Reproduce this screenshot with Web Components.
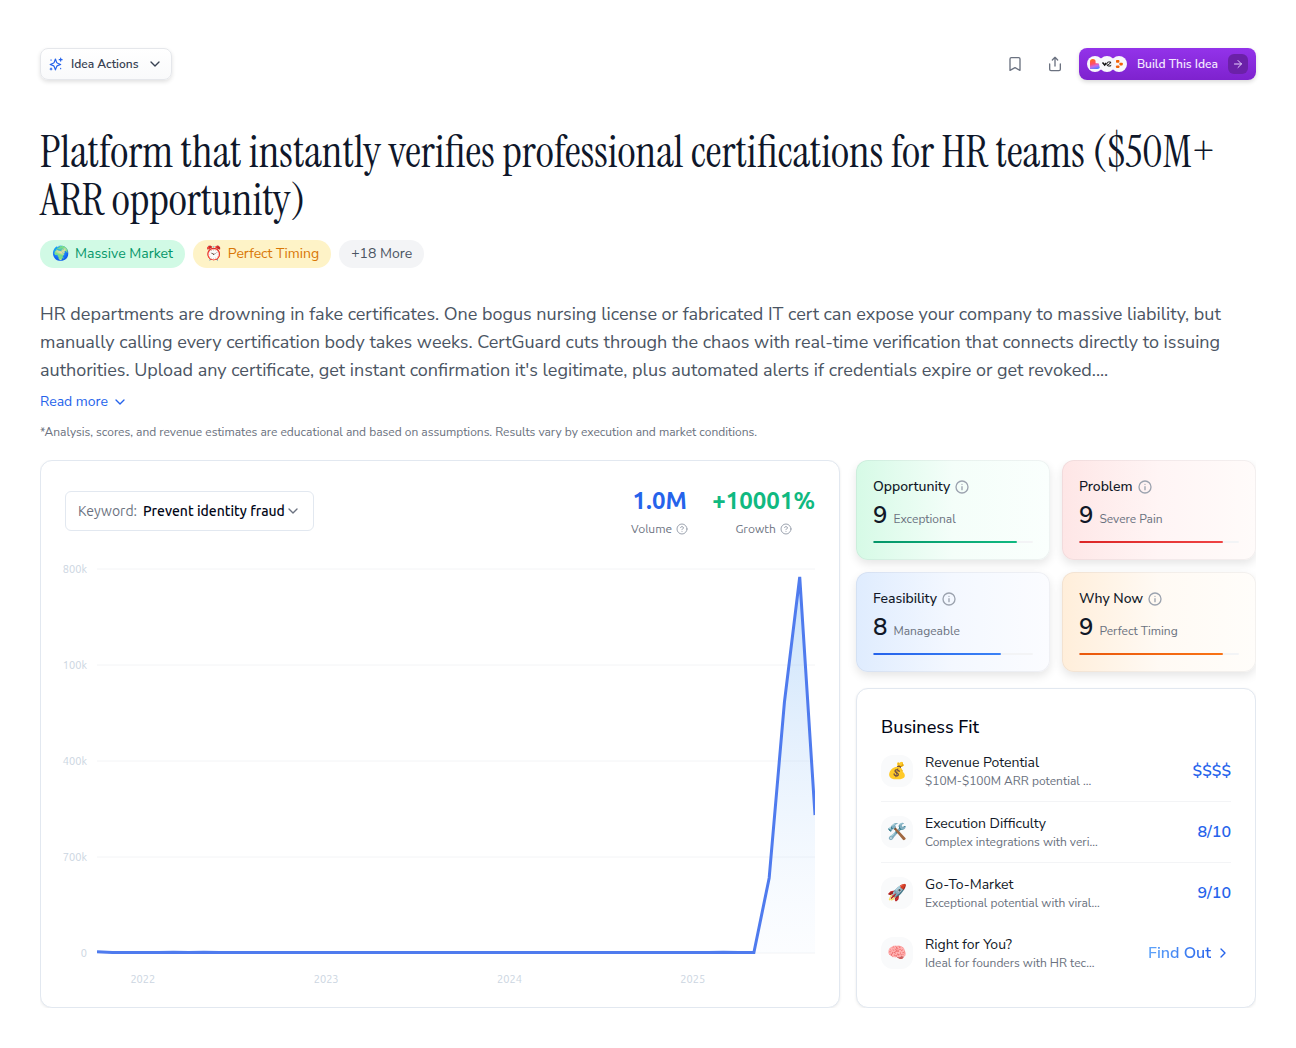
<!DOCTYPE html>
<html lang="en">
<head>
<meta charset="utf-8">
<meta name="viewport" content="width=device-width, initial-scale=1">
<title>Idea overview</title>
<style>
  body {
    margin: 0;
    background: #fff;
    color: #111827;
    font-family: "Nunito Sans", Nunito, Lato, "Liberation Sans", sans-serif;
    --display-font: "Instrument Serif", "Liberation Serif", serif;
    --chart-font: Ubuntu, "Open Sans", "Noto Sans", sans-serif;
  }
</style>
</head>
<body>

<idea-page>
  <action-button slot="toolbar-left" icon="sparkles">Idea Actions</action-button>
  <icon-button slot="toolbar-right" icon="bookmark" label="Save idea"></icon-button>
  <icon-button slot="toolbar-right" icon="share" label="Share idea"></icon-button>
  <build-button slot="toolbar-right">Build This Idea</build-button>

  <idea-summary>
    <span slot="title">Platform that instantly verifies professional certifications for HR teams ($50M+ ARR opportunity)</span>
    <tag-pill slot="tags" tone="green" emoji="🌍">Massive Market</tag-pill>
    <tag-pill slot="tags" tone="amber" emoji="⏰">Perfect Timing</tag-pill>
    <tag-pill slot="tags">+18 More</tag-pill>
    <span slot="description">HR departments are drowning in fake certificates. One bogus nursing license or fabricated IT cert can expose your company to massive liability, but manually calling every certification body takes weeks. CertGuard cuts through the chaos with real-time verification that connects directly to issuing authorities. Upload any certificate, get instant confirmation it's legitimate, plus automated alerts if credentials expire or get revoked....</span>
    <span slot="note">*Analysis, scores, and revenue estimates are educational and based on assumptions. Results vary by execution and market conditions.</span>
  </idea-summary>

  <trend-card slot="trend">
    <keyword-select slot="keyword"></keyword-select>
    <trend-stat slot="stats" value="1.0M" tone="blue">Volume</trend-stat>
    <trend-stat slot="stats" value="+10001%" tone="green">Growth</trend-stat>
    <trend-chart></trend-chart>
  </trend-card>

  <score-card slot="scores" tone="green" score="9" rating="Exceptional">Opportunity</score-card>
  <score-card slot="scores" tone="red" score="9" rating="Severe Pain">Problem</score-card>
  <score-card slot="scores" tone="blue" score="8" rating="Manageable">Feasibility</score-card>
  <score-card slot="scores" tone="orange" score="9" rating="Perfect Timing">Why Now</score-card>

  <fit-card slot="fit" heading="Business Fit">
    <fit-row divided emoji="💰" heading="Revenue Potential" detail="$10M-$100M ARR potential ...">$$$$</fit-row>
    <fit-row divided emoji="🛠️" heading="Execution Difficulty" detail="Complex integrations with veri...">8/10</fit-row>
    <fit-row emoji="🚀" heading="Go-To-Market" detail="Exceptional potential with viral...">9/10</fit-row>
    <fit-row link emoji="🧠" heading="Right for You?" detail="Ideal for founders with HR tec...">Find Out</fit-row>
  </fit-card>
</idea-page>

<script>
// 24x24 stroke icons
const ICONS = {
  sparkles: '<path d="M11 3.500l2 5.500a3 3 0 0 0 1.800 1.800l5.200 2-5.200 2a3 3 0 0 0-1.800 1.800l-2 5.400-2-5.400a3 3 0 0 0-1.800-1.800l-5.200-2 5.200-2A3 3 0 0 0 9 9z"/><path d="M20 2v5M17.500 4.500h5M3.500 19v3M2 20.500h3M20 19.500v.5M3.500 5v.5"/>',
  chevronDown: '<path d="M6 9l6 6 6-6"/>',
  chevronRight: '<path d="M9 6l6 6-6 6"/>',
  bookmark: '<path d="M19.500 21.500L12 17.500l-7.500 4V4.500a2 2 0 0 1 2-2h11a2 2 0 0 1 2 2z"/>',
  share: '<path d="M4 12v8a2 2 0 0 0 2 2h12a2 2 0 0 0 2-2v-8M16 6l-4-4-4 4M12 2v13"/>',
  arrowRight: '<path d="M5 12h14M12 5l7 7-7 7"/>',
  info: '<circle cx="12" cy="12" r="9"/><path d="M12 16v-4.500M12 8v.01"/>',
  help: '<circle cx="12" cy="12" r="10"/><path d="M9.100 9a3 3 0 0 1 5.800 1c0 2-3 3-3 3M12 17v.01"/>'
};

function icon(name, size, stroke = 2) {
  return `<svg width="${size}" height="${size}" viewBox="0 0 24 24" fill="none" stroke="currentColor" stroke-width="${stroke}" stroke-linecap="round" stroke-linejoin="round" aria-hidden="true">${ICONS[name]}</svg>`;
}

const BASE = `
  *, *::before { box-sizing: border-box; }
  :host { display: block; box-sizing: border-box; }
  svg { display: block; flex: none; }
  button, select { font: inherit; color: inherit; cursor: pointer; }
`;

// Shared base: renders css() and html() into an open shadow root
class BaseElement extends HTMLElement {
  constructor() {
    super();
    this.attachShadow({ mode: 'open' });
  }

  connectedCallback() {
    this.shadowRoot.innerHTML = `<style>${BASE}${this.css()}</style>${this.html()}`;
    this.setup();
  }

  css() { return ''; }
  html() { return '<slot></slot>'; }
  setup() {}
  attr(name) { return this.getAttribute(name) || ''; }
}

class IdeaPage extends BaseElement {
  css() {
    return `
      :host { padding: 48px 40px 40px; }
      .toolbar { display: flex; justify-content: space-between; gap: 16px; margin-bottom: 48px; }
      .group { display: flex; align-items: center; gap: 8px; }
      .grid {
        display: grid;
        grid-template-columns: 2fr 1fr;
        gap: 16px;
        margin-top: 20px;
        overflow: hidden;
      }
      .side { display: flex; flex-direction: column; gap: 16px; min-width: 0; }
      .scores { display: grid; grid-template-columns: 1fr 1fr; gap: 12px; }
      @media (max-width: 960px) {
        .grid { grid-template-columns: 1fr; }
      }
    `;
  }

  html() {
    return `
      <header class="toolbar">
        <div class="group"><slot name="toolbar-left"></slot></div>
        <div class="group"><slot name="toolbar-right"></slot></div>
      </header>
      <main>
        <slot></slot>
        <div class="grid">
          <slot name="trend"></slot>
          <div class="side">
            <div class="scores"><slot name="scores"></slot></div>
            <slot name="fit"></slot>
          </div>
        </div>
      </main>
    `;
  }
}

class ActionButton extends BaseElement {
  css() {
    return `
      button {
        display: flex;
        align-items: center;
        gap: 8px;
        height: 32px;
        padding: 0 8px;
        border: 1px solid #e5e7eb;
        border-radius: 8px;
        background: linear-gradient(#fff, #f9fafb);
        box-shadow: 0 2px 4px rgba(0, 0, 0, 0.12);
        color: #374151;
        font-size: 12px;
        font-weight: 600;
      }
      .lead { color: #2563eb; }
    `;
  }

  html() {
    return `<button type="button"><span class="lead">${icon(this.attr('icon'), 14)}</span><slot></slot>${icon('chevronDown', 16)}</button>`;
  }
}

class IconButton extends BaseElement {
  css() {
    return `
      button {
        display: grid;
        place-items: center;
        width: 32px;
        height: 32px;
        padding: 0;
        border: 0;
        border-radius: 8px;
        background: none;
        color: #6b7280;
      }
    `;
  }

  html() {
    return `<button type="button" aria-label="${this.attr('label')}">${icon(this.attr('icon'), 16)}</button>`;
  }
}

class BuildButton extends BaseElement {
  css() {
    return `
      button {
        display: flex;
        align-items: center;
        gap: 10px;
        height: 32px;
        padding: 0 8px;
        border: 0;
        border-radius: 8px;
        background: linear-gradient(#9333ea, #7e22ce);
        box-shadow: 0 2px 4px rgba(0, 0, 0, 0.15);
        color: #f3e8ff;
        font-size: 12px;
        font-weight: 600;
      }
      .logos { display: flex; }
      .logos svg { border-radius: 50%; background: #f8f8fb; }
      .logos svg + svg { margin-left: -4px; }
      .arrow {
        display: grid;
        place-items: center;
        width: 20px;
        height: 20px;
        border-radius: 6px;
        background: #6b21a8;
        color: #e9d5ff;
      }
    `;
  }

  html() {
    return `
      <button type="button">
        <span class="logos" aria-hidden="true">
          <svg width="16" height="16" viewBox="0 0 16 16">
            <defs>
              <linearGradient id="heart" x1="0.300" y1="0" x2="0.600" y2="1">
                <stop offset="0" stop-color="#ff6a1a"/>
                <stop offset="0.450" stop-color="#ff4f6d"/>
                <stop offset="0.700" stop-color="#c46bf0"/>
                <stop offset="1" stop-color="#4b7dff"/>
              </linearGradient>
            </defs>
            <path fill="url(#heart)" d="M3 13V5.800a2.800 2.800 0 0 1 5.600 0v1.400h1.600a2.900 2.900 0 0 1 2.900 2.900V10a3 3 0 0 1-3 3z"/>
          </svg>
          <svg width="16" height="16" viewBox="0 0 16 16" fill="none" stroke="#111" stroke-width="1">
            <path stroke-width="1.500" d="M3.500 6.500l2.200 2.500L7.200 7"/>
            <rect x="8" y="6" width="4.500" height="4" rx="1.500"/>
            <path d="M8.500 9.500l3.500-3"/>
          </svg>
          <svg width="16" height="16" viewBox="0 0 16 16" fill="#f26207">
            <rect x="5" y="4" width="3.400" height="2.700" rx="0.800"/>
            <rect x="8.400" y="6.700" width="3.400" height="2.700" rx="0.800"/>
            <rect x="5" y="9.400" width="3.400" height="2.700" rx="0.800"/>
          </svg>
        </span>
        <slot></slot>
        <span class="arrow">${icon('arrowRight', 12)}</span>
      </button>
    `;
  }
}

class IdeaSummary extends BaseElement {
  css() {
    return `
      h1 {
        margin: 0;
        color: #0f172a;
        font: 400 44px/48px var(--display-font);
      }
      .tags { display: flex; flex-wrap: wrap; gap: 8px; margin: 16px 0 32px; }
      p { margin: 0; }
      .description { color: #4b5563; font-size: 18px; line-height: 28px; }
      button {
        display: flex;
        align-items: center;
        gap: 4px;
        margin: 8px 0 12px;
        padding: 0;
        border: 0;
        background: none;
        color: #2563eb;
        font-size: 14px;
        line-height: 20px;
      }
      .note { color: #6b7280; font-size: 12px; line-height: 16px; }
    `;
  }

  html() {
    return `
      <h1><slot name="title"></slot></h1>
      <div class="tags"><slot name="tags"></slot></div>
      <p class="description"><slot name="description"></slot></p>
      <button type="button">Read more ${icon('chevronDown', 16)}</button>
      <p class="note"><slot name="note"></slot></p>
    `;
  }
}

class TagPill extends BaseElement {
  css() {
    return `
      :host {
        display: flex;
        gap: 6px;
        padding: 4px 12px;
        border-radius: 14px;
        background: #f3f4f6;
        color: #4b5563;
        font-size: 14px;
        line-height: 20px;
      }
      :host([tone="green"]) { background: #d1fae5; color: #059669; }
      :host([tone="amber"]) { background: #fef3c7; color: #d97706; }
    `;
  }

  html() {
    const emoji = this.attr('emoji');
    return `${emoji ? `<span>${emoji}</span>` : ''}<span><slot></slot></span>`;
  }
}

// White bordered panel used by both large cards
const PANEL = `
  :host {
    padding: 24px;
    border: 1px solid #e2e8f0;
    border-radius: 12px;
    background: #fff;
    box-shadow: 0 1px 3px rgba(0, 0, 0, 0.08);
  }
`;

class TrendCard extends BaseElement {
  css() {
    return `
      ${PANEL}
      :host { display: flex; flex-direction: column; gap: 24px; min-width: 0; }
      .head { display: flex; flex-wrap: wrap; align-items: center; justify-content: space-between; gap: 16px; }
      .stats { display: flex; gap: 24px; }
    `;
  }

  html() {
    return `
      <div class="head">
        <slot name="keyword"></slot>
        <div class="stats"><slot name="stats"></slot></div>
      </div>
      <slot></slot>
    `;
  }
}

class KeywordSelect extends BaseElement {
  css() {
    return `
      :host {
        display: flex;
        align-items: center;
        height: 40px;
        padding: 0 12px;
        border: 1px solid #e2e8f0;
        border-radius: 6px;
        font-family: var(--chart-font);
        font-size: 14px;
        color: #6b7280;
      }
      label { margin-right: 6px; }
      select {
        appearance: none;
        padding: 0;
        border: 0;
        background: none;
        color: #020617;
        font-weight: 500;
      }
    `;
  }

  html() {
    return `
      <label for="keyword">Keyword:</label>
      <select id="keyword"><option>Prevent identity fraud</option></select>
      ${icon('chevronDown', 16)}
    `;
  }
}

class TrendStat extends BaseElement {
  css() {
    return `
      :host { text-align: center; font-family: var(--chart-font); }
      .value { font-size: 24px; font-weight: 700; line-height: 32px; color: #2563eb; }
      :host([tone="green"]) .value { color: #10b981; }
      .label {
        display: flex;
        align-items: center;
        justify-content: center;
        gap: 4px;
        margin-top: 4px;
        color: #6b7280;
        font-size: 12px;
        line-height: 16px;
      }
      svg { color: #9ca3af; }
    `;
  }

  html() {
    return `
      <div class="value">${this.attr('value')}</div>
      <div class="label"><slot></slot>${icon('help', 12)}</div>
    `;
  }
}

class TrendChart extends BaseElement {
  css() {
    return `
      :host { display: grid; flex: 1; min-height: 320px; }
      svg { width: 100%; height: 100%; min-height: 0; overflow: visible; }
      text { font: 11px var(--chart-font); fill: #cbd5e1; }
    `;
  }

  html() {
    return '<svg role="img" aria-label="Search volume by month"></svg>';
  }

  setup() {
    // Monthly searches in thousands, October 2021 onwards
    this.values = new Array(48).fill(3);
    this.values[0] = 10;
    [5, 7, 41].forEach((i) => { this.values[i] = 5; });
    this.values.splice(44, 4, 547, 1830, 2742, 1006);
    this.draw();
    new ResizeObserver(() => this.draw()).observe(this);
  }

  draw() {
    const width = this.clientWidth;
    const height = this.clientHeight;
    const left = 32;
    const top = 8;
    const bottom = height - 30;
    const max = 2800;
    const x = (i) => left + (i * (width - left)) / (this.values.length - 1);
    const y = (v) => bottom - (v / max) * (bottom - top);

    const grid = ['0', '700k', '400k', '100k', '800k'].map((label, n) => `
      <line x1="${left}" x2="${width}" y1="${y(n * 700)}" y2="${y(n * 700)}" stroke="#f3f4f6"/>
      <text x="22" y="${y(n * 700) + 4}" text-anchor="end">${label}</text>
    `).join('');
    const years = [2022, 2023, 2024, 2025].map((year, n) => `
      <text x="${x(3 + n * 12)}" y="${bottom + 30}" text-anchor="middle">${year}</text>
    `).join('');
    const points = this.values.map((v, i) => `${x(i)},${y(v)}`).join(' ');

    this.shadowRoot.querySelector('svg').innerHTML = `
      <defs>
        <linearGradient id="area" x1="0" y1="0" x2="0" y2="1">
          <stop offset="0" stop-color="#8ec1f6" stop-opacity="0.500"/>
          <stop offset="1" stop-color="#dbeafe" stop-opacity="0.100"/>
        </linearGradient>
        <clipPath id="plot"><rect x="${left}" width="${width - left}" height="${height}"/></clipPath>
      </defs>
      ${grid}${years}
      <g clip-path="url(#plot)">
        <polygon points="${left},${bottom} ${points} ${width},${bottom}" fill="url(#area)"/>
        <polyline points="${points}" fill="none" stroke="#4f7bee" stroke-width="3"/>
      </g>
    `;
  }
}

class ScoreCard extends BaseElement {
  css() {
    return `
      :host {
        padding: 16px;
        border: 1px solid rgba(15, 23, 42, 0.05);
        border-radius: 12px;
        background: linear-gradient(to right, var(--from), var(--via), var(--to)) border-box;
        box-shadow: 0 4px 10px rgba(0, 0, 0, 0.1);
      }
      :host([tone="green"]) { --from: #d6fae6; --via: #f4fef9; --to: #fafffd; --bar: #059669, #10b981; }
      :host([tone="red"]) { --from: #fee6e6; --via: #fff5f5; --to: #fffbfa; --bar: #dc2626, #ef4444; }
      :host([tone="blue"]) { --from: #dfecfe; --via: #f4f8ff; --to: #fbfcff; --bar: #2563eb, #3b82f6; }
      :host([tone="orange"]) { --from: #ffeeda; --via: #fffaf4; --to: #fffdfa; --bar: #ea580c, #f97316; }
      .name { display: flex; align-items: center; gap: 4px; font-size: 14px; font-weight: 500; line-height: 20px; }
      .name svg { color: #9ca3af; }
      .result { display: flex; align-items: baseline; gap: 6px; margin: 4px 0 12px; }
      .score { font-size: 24px; font-weight: 600; line-height: 28px; }
      .rating { color: #6b7280; font-size: 12px; line-height: 16px; }
      .track { height: 2px; border-radius: 1px; background: #f3f4f6; overflow: hidden; }
      .fill { height: 100%; border-radius: 1px; background: linear-gradient(to right, var(--bar)); }
    `;
  }

  html() {
    const score = this.attr('score');
    return `
      <div class="name"><slot></slot>${icon('info', 16)}</div>
      <div class="result">
        <span class="score">${score}</span>
        <span class="rating">${this.attr('rating')}</span>
      </div>
      <div class="track"><div class="fill" style="width: ${score * 10}%"></div></div>
    `;
  }
}

class FitCard extends BaseElement {
  css() {
    return `
      ${PANEL}
      h2 { margin: 0; color: #020617; font-size: 18px; font-weight: 500; line-height: 28px; }
    `;
  }

  html() {
    return `<h2>${this.attr('heading')}</h2><slot></slot>`;
  }
}

class FitRow extends BaseElement {
  css() {
    return `
      :host { display: flex; align-items: center; gap: 12px; padding: 12px 0; }
      :host([divided]) { border-bottom: 1px solid #f3f4f6; }
      .emoji {
        display: grid;
        place-items: center;
        flex: none;
        width: 32px;
        height: 32px;
        border-radius: 12px;
        background: #f9fafb;
        font-size: 16px;
        line-height: 16px;
      }
      .text { flex: 1; min-width: 0; }
      .heading { font-size: 14px; line-height: 20px; }
      .detail { color: #6b7280; font-size: 12px; line-height: 16px; }
      .value { color: #2563eb; font-size: 16px; font-weight: 600; line-height: 24px; }
      a { display: flex; align-items: center; gap: 4px; text-decoration: none; }
      a span {
        background: linear-gradient(to right, #60a5fa, #2563eb);
        background-clip: text;
        color: transparent;
      }
    `;
  }

  html() {
    const value = this.hasAttribute('link')
      ? `<a class="value" href="#fit"><span><slot></slot></span>${icon('chevronRight', 16)}</a>`
      : '<div class="value"><slot></slot></div>';
    return `
      <div class="emoji">${this.attr('emoji')}</div>
      <div class="text">
        <div class="heading">${this.attr('heading')}</div>
        <div class="detail">${this.attr('detail')}</div>
      </div>
      ${value}
    `;
  }
}

customElements.define('idea-page', IdeaPage);
customElements.define('action-button', ActionButton);
customElements.define('icon-button', IconButton);
customElements.define('build-button', BuildButton);
customElements.define('idea-summary', IdeaSummary);
customElements.define('tag-pill', TagPill);
customElements.define('trend-card', TrendCard);
customElements.define('keyword-select', KeywordSelect);
customElements.define('trend-stat', TrendStat);
customElements.define('trend-chart', TrendChart);
customElements.define('score-card', ScoreCard);
customElements.define('fit-card', FitCard);
customElements.define('fit-row', FitRow);
</script>
</body>
</html>
